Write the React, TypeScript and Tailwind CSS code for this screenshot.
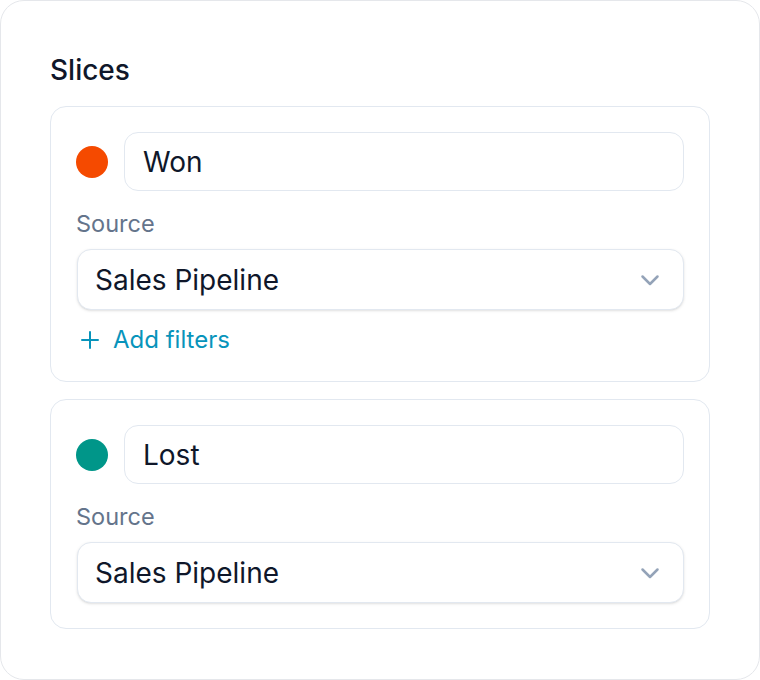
const slices = [
  { name: "Won", color: "bg-[#f54a00]", source: "Sales Pipeline", filters: true },
  { name: "Lost", color: "bg-[#009689]", source: "Sales Pipeline", filters: false },
];

function Chevron() {
  return (
    <svg width="20" height="12" viewBox="0 0 20 12" fill="none" className="text-[#94a3b8]">
      <path d="M2.5 2.5l7.5 7.5 7.5-7.5" stroke="currentColor" strokeWidth="2.5" strokeLinecap="round" strokeLinejoin="round" />
    </svg>
  );
}

function Plus() {
  return (
    <svg width="18" height="18" viewBox="0 0 18 18" fill="none">
      <path d="M9 1v16M1 9h16" stroke="currentColor" strokeWidth="2" strokeLinecap="round" />
    </svg>
  );
}

function SliceCard({ name, color, source, filters }: (typeof slices)[number]) {
  return (
    <div className="rounded-[16px] border border-[#e2e8f0] bg-white p-[25px]">
      <div className="flex items-center gap-4">
        <span className={`size-8 shrink-0 rounded-full ${color}`} />
        <div className="flex h-[59px] flex-1 items-center rounded-[14px] border border-[#e2e8f0] px-[18px] text-[28px] text-[#0f172a]">
          {name}
        </div>
      </div>
      <div className="mt-[18px] text-[23.5px] leading-[30px] text-[#64748b]">Source</div>
      <div className="ml-px mt-[10px] flex h-[61px] items-center justify-between rounded-[14px] border border-[#e2e8f0] bg-white pl-[17px] pr-[23px] text-[28px] text-[#0f172a] shadow-sm">
        <span>{source}</span>
        <Chevron />
      </div>
      {filters && (
        <div className="mb-[2px] mt-[16px] flex h-[28px] items-center gap-[14px] pl-[5px] text-[24px] leading-[28px] text-[#0894bb]">
          <Plus />
          <span>Add filters</span>
        </div>
      )}
    </div>
  );
}

export default function App() {
  return (
    <div className="h-[680px] w-[760px] bg-white font-['Inter',sans-serif]">
      <div className="flex h-full flex-col rounded-[24px] border border-[#e5e7eb] px-[49px] pt-[52px]">
        <h2 className="mb-[19px] text-[28px] font-medium leading-[34px] text-[#0f172a]">Slices</h2>
        <div className="flex flex-col gap-[17px]">
          {slices.map((s) => (
            <SliceCard key={s.name} {...s} />
          ))}
        </div>
      </div>
    </div>
  );
}
